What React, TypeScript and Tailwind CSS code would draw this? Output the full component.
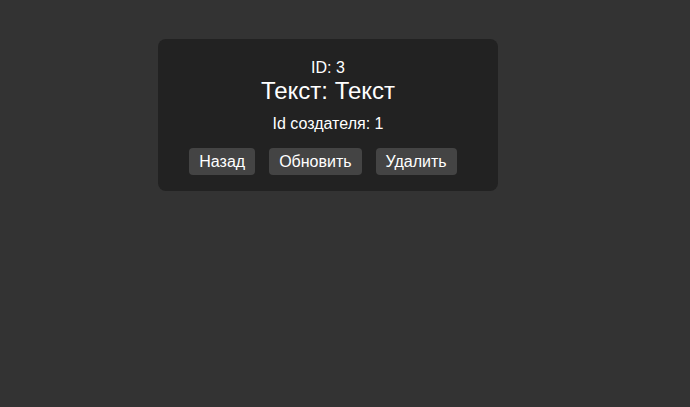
const buttons = ["Назад", "Обновить", "Удалить"];

export default function App() {
  return (
    <div className="min-h-[407px] bg-[#333333] pt-[39px] font-['Liberation_Sans',Arial,sans-serif] text-white">
      <div className="ml-[158px] flex w-[340px] flex-col items-center rounded-[8px] bg-[#222222] pt-[20px] pb-[16px]">
        <div className="text-[16px] leading-[18.4px]">ID: 3</div>
        <h2 className="text-[24px] leading-[27.6px]">Текст: Текст</h2>
        <p className="mt-[10px] text-[16px] leading-[18.4px]">Id создателя: 1</p>
        <div className="mt-[15px] flex gap-[4px]">
          {buttons.map((label) => (
            <button
              key={label}
              className="mr-[10px] h-[27px] rounded-[4px] bg-[#444444] px-[10px] text-[16px] leading-[18.4px] text-white"
            >
              {label}
            </button>
          ))}
        </div>
      </div>
    </div>
  );
}
